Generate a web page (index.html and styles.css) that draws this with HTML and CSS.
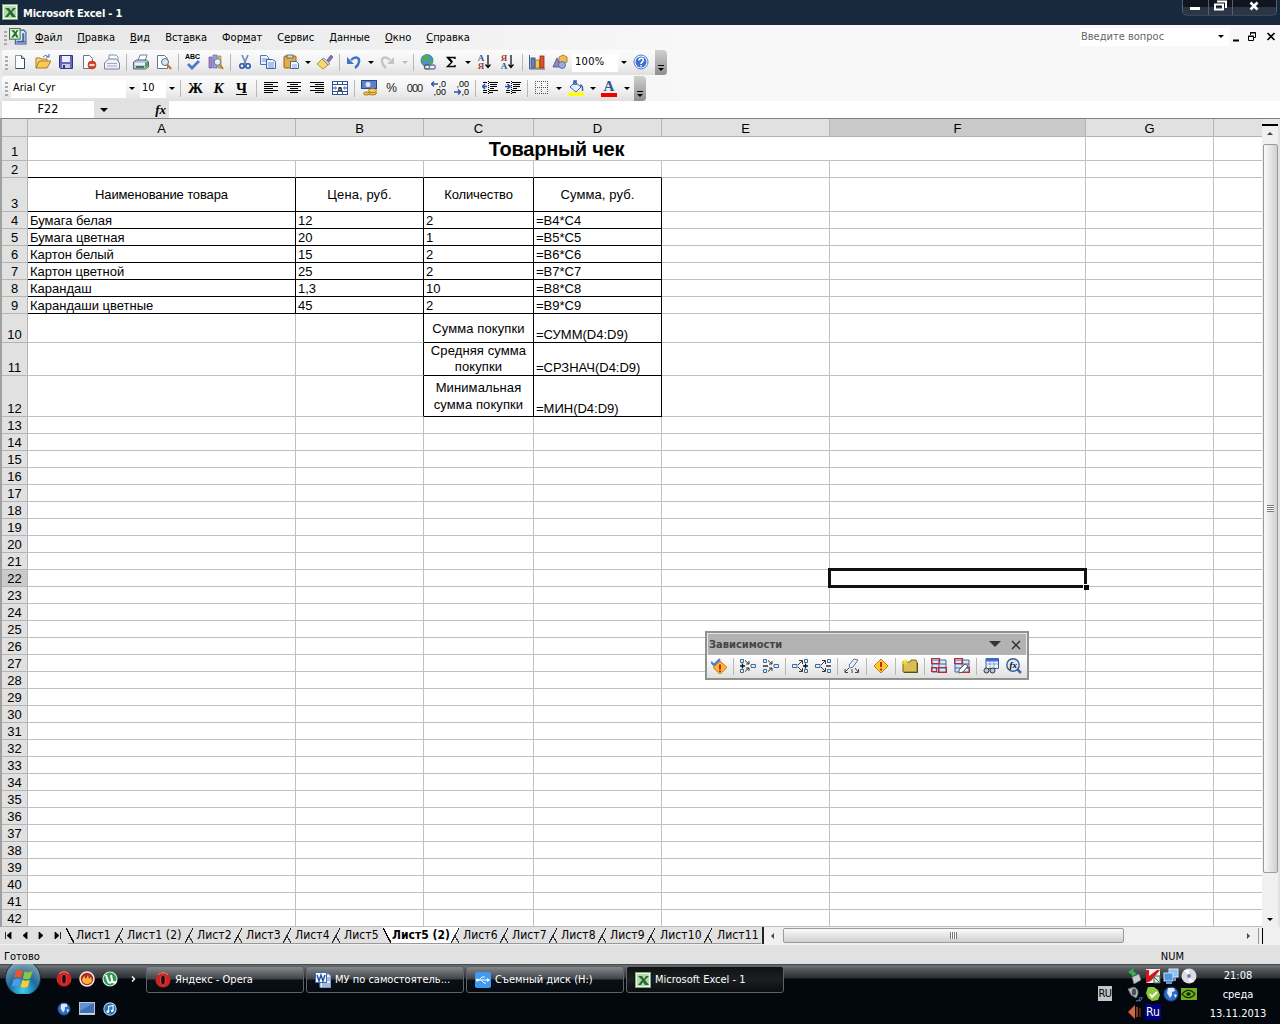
FILE: index.html
```html
<!DOCTYPE html>
<html lang="ru">
<head>
    <meta charset="UTF-8">
    <meta name="viewport" content="width=device-width, initial-scale=1.0">
    <title>Microsoft Excel - 1</title>
    <link rel="stylesheet" href="styles.css">
</head>
<body>
    <!-- Shared icons -->
    <svg class="sprite" width="0" height="0">
        <symbol id="excel" viewBox="0 0 16 16">
            <rect x=".5" y=".5" width="15" height="15" fill="#f2f8ee" stroke="#79a878"/>
            <rect x="2" y="2" width="12" height="12" fill="#b9d6b2"/>
            <path d="M3 4h4l2 3 2-3h3l-4 4 4 5h-4l-2-3-2 3H3l4-5z" fill="#256b32"/>
        </symbol>
        <symbol id="excel-doc" viewBox="0 0 17 16">
            <path d="M6 2h8l2 2v11H6z" fill="#dce8f8" stroke="#33548e"/>
            <path d="M7 13h8M13.500 5v8" stroke="#3f6aaa" stroke-width="2"/>
            <rect x=".5" y=".5" width="10" height="10" fill="#e4f2de" stroke="#3d7a40"/>
            <path d="M2 2h3l1 2 1-2h2L7 5l2 4H7L6 7 4 9H2l3-4z" fill="#256b32"/>
        </symbol>
        <symbol id="page" viewBox="0 0 16 16">
            <path d="M3.500 1.500h6l3 3v10h-9z" fill="#fdfeff" stroke="#8794aa"/>
            <path d="M9.500 1.500v3h3v10h-9" fill="none" stroke="#34496e"/>
        </symbol>
        <symbol id="open" viewBox="0 0 16 16">
            <path d="M1 14V4h4l1 1h6v2" fill="#f8dd86" stroke="#a67a1e"/>
            <path d="M1 14l3-7h12l-4 7z" fill="#fbc95a" stroke="#a67a1e"/>
            <path d="M8 3c2-2 4-2 5 0M11 3h3V0" fill="none" stroke="#3c64ac"/>
        </symbol>
        <symbol id="save" viewBox="0 0 16 16">
            <path d="M1.500 1.500h13v13h-12l-1-1z" fill="#6667c8" stroke="#34347e"/>
            <rect x="4" y="2" width="8" height="6" fill="#eef0fb"/>
            <rect x="4" y="10" width="8" height="4" fill="#c9cbe2"/>
            <rect x="5" y="11" width="2" height="3" fill="#34347e"/>
        </symbol>
        <symbol id="permission" viewBox="0 0 16 16">
            <path d="M2.500 1.500h6l3 3v10h-9z" fill="#fff" stroke="#66758f"/>
            <circle cx="11" cy="11" r="4" fill="#dc4526" stroke="#a33018" stroke-width=".6"/>
            <path d="M8.500 11h5" stroke="#fff" stroke-width="1.700"/>
        </symbol>
        <symbol id="mail" viewBox="0 0 16 16">
            <path d="M5 6V1h7l2 2v6" fill="#fff" stroke="#8793a6"/>
            <path d="M.5 9l4-4h8l3 4v6H.5z" fill="#eef1f5" stroke="#77849a"/>
            <path d="M3 9.500h10M3 12h10" fill="none" stroke="#a0abba"/>
        </symbol>
        <symbol id="print" viewBox="0 0 16 16">
            <path d="M5 7l2-6h7l-2 6" fill="#fff" stroke="#7282a0"/>
            <path d="M.5 8l3-2h10l2 2v5l-3 2H.5z" fill="#b9c7da" stroke="#54637d"/>
            <path d="M2 10h10" stroke="#eef3fa" stroke-width="2"/>
            <path d="M12 9l3-2v5l-3 2z" fill="#57a458"/>
            <path d="M3 13h8" stroke="#3f7d46" stroke-width="2"/>
        </symbol>
        <symbol id="preview" viewBox="0 0 16 16">
            <path d="M1.500 1.500h7l3 3v10h-10z" fill="#fff" stroke="#66758f"/>
            <circle cx="9" cy="8" r="3.500" fill="#d4e7f6" stroke="#5b6d84"/>
            <path d="M11.500 11l3.500 4" stroke="#b87833" stroke-width="2.200"/>
        </symbol>
        <symbol id="research" viewBox="0 0 16 16">
            <path d="M1 3h3v11H1z" fill="#a887cc" stroke="#694b93" stroke-width=".7"/>
            <path d="M5 1h4v13H5z" fill="#8fa7de" stroke="#4d68a8" stroke-width=".7"/>
            <path d="M10 2h3v12h-3z" fill="#e9c46b" stroke="#a37b2c" stroke-width=".7"/>
            <circle cx="9.500" cy="8" r="3.300" fill="#e3f0fb" stroke="#677a92"/>
            <path d="M12 11l3 4" stroke="#b87833" stroke-width="2"/>
        </symbol>
        <symbol id="cut" viewBox="0 0 16 16">
            <path d="M5 1l4 9M11 1l-4 9" stroke="#6f89ae" stroke-width="1.600"/>
            <circle cx="5" cy="12" r="2.200" fill="none" stroke="#2456b0" stroke-width="1.600"/>
            <circle cx="11" cy="12" r="2.200" fill="none" stroke="#2456b0" stroke-width="1.600"/>
        </symbol>
        <symbol id="copy" viewBox="0 0 16 16">
            <path d="M.5 1.500h6l2 2v7h-8z" fill="#eaf2ff" stroke="#4c73b5"/>
            <path d="M2 5h5M2 7h5" stroke="#7095cc"/>
            <path d="M6.500 5.500h6l3 2v7h-9z" fill="#eaf2ff" stroke="#3c64a8"/>
            <path d="M8 9h6M8 11h6M8 13h6" stroke="#7095cc"/>
        </symbol>
        <symbol id="paste" viewBox="0 0 16 16">
            <rect x="1" y="2" width="12" height="12" rx="1" fill="#e4ad49" stroke="#8d651f"/>
            <rect x="4" y="1" width="6" height="3" fill="#d9d9d9" stroke="#555" stroke-width=".8"/>
            <path d="M7.500 7.500h6l2 2v5h-8z" fill="#f2f6ff" stroke="#4d68a0"/>
            <path d="M9 11h5M9 13h5" stroke="#89a3d0"/>
        </symbol>
        <symbol id="brush" viewBox="0 0 16 16">
            <path d="M10 6l4-5 2 2-4 5z" fill="#8b6fb5" stroke="#4e3b79" stroke-width=".6"/>
            <path d="M7 4l6 6-2 1-6-6z" fill="#c9d0dd" stroke="#66708a" stroke-width=".6"/>
            <path d="M5 5l6 6-5 4-6-5z" fill="#f6d873" stroke="#a67f2a" stroke-width=".8"/>
        </symbol>
        <symbol id="undo" viewBox="0 0 16 16">
            <path d="M5 6c4-4 9-3 8 2-.3 2-1.500 4-4 6" fill="none" stroke="currentColor" stroke-width="2.400"/>
            <path d="M1 3v7h7z" fill="currentColor"/>
        </symbol>
        <symbol id="link" viewBox="0 0 16 16">
            <circle cx="7" cy="6.500" r="6" fill="#4a94c9" stroke="#2e6392" stroke-width=".7"/>
            <path d="M3 2c3-2 7-1 7 2l-3 1-1 3-4-1zM10 7l3-1-1 4-3 1z" fill="#54ac52"/>
            <rect x="4.500" y="11" width="6" height="4" rx="2" fill="#eee" stroke="#4e5d72" stroke-width="1.300"/>
            <rect x="9.300" y="11" width="6" height="4" rx="2" fill="#eee" stroke="#6c7f98" stroke-width="1.300"/>
        </symbol>
        <symbol id="sum" viewBox="0 0 16 16">
            <path d="M12 5V3.500H4.500L9 8l-4.500 4.500H12V11" fill="none" stroke="#000" stroke-width="1.400"/>
            <path d="M5 3.500L9 8" stroke="#000" stroke-width="2"/>
        </symbol>
        <symbol id="chart" viewBox="0 0 16 16">
            <path d="M.5 1v14H16" fill="none" stroke="#4c5e7c"/>
            <rect x="2" y="4" width="4" height="10" fill="#5a83d2" stroke="#27458a" stroke-width=".8"/>
            <rect x="6.500" y="6" width="4" height="8" fill="#f6c944" stroke="#9a7116" stroke-width=".8"/>
            <rect x="11" y="2" width="4" height="12" fill="#d8572e" stroke="#8a2a10" stroke-width=".8"/>
        </symbol>
        <symbol id="drawing" viewBox="0 0 16 16">
            <path d="M7 3l4-2 4 2v5l-4 2-4-2z" fill="#eebd56" stroke="#9a6d1f" stroke-width=".8"/>
            <path d="M1 13l4-9 4 9z" fill="#8c86cc" stroke="#4c478c" stroke-width=".8"/>
            <circle cx="10" cy="11" r="3.500" fill="#9aacd8" stroke="#4c5f9a" stroke-width=".8"/>
        </symbol>
        <symbol id="help" viewBox="0 0 16 16">
            <circle cx="8" cy="8" r="7" fill="#fff" stroke="#4d79c4"/>
            <circle cx="8" cy="8" r="5.500" fill="#3d6fd0"/>
            <path d="M6 6.500c0-3 4.500-3 4.300-.3C10.200 8 8 7.800 8 10M8 11v1.600" fill="none" stroke="#fff" stroke-width="1.500"/>
        </symbol>
        <symbol id="align-left" viewBox="0 0 16 16">
            <path d="M1 2.500h14M1 4.500h9M1 6.500h14M1 8.500h9M1 10.500h14M1 12.500h9" stroke="#000"/>
        </symbol>
        <symbol id="align-center" viewBox="0 0 16 16">
            <path d="M1 2.500h14M4 4.500h8M1 6.500h14M4 8.500h8M1 10.500h14M4 12.500h8" stroke="#000"/>
        </symbol>
        <symbol id="align-right" viewBox="0 0 16 16">
            <path d="M1 2.500h14M6 4.500h9M1 6.500h14M6 8.500h9M1 10.500h14M6 12.500h9" stroke="#000"/>
        </symbol>
        <symbol id="currency" viewBox="0 0 16 16">
            <rect x=".5" y=".5" width="15" height="8" fill="#5d82c9" stroke="#27458a"/>
            <circle cx="7" cy="4.500" r="2.500" fill="#dfe8f8"/>
            <ellipse cx="11.500" cy="13" rx="4" ry="2" fill="#f2b93c" stroke="#94681a" stroke-width=".8"/>
            <ellipse cx="11.500" cy="10.500" rx="4" ry="2" fill="#f7cf63" stroke="#94681a" stroke-width=".8"/>
            <ellipse cx="5.500" cy="13.500" rx="3" ry="1.600" fill="#f2b93c" stroke="#94681a" stroke-width=".8"/>
        </symbol>
        <symbol id="indent-lines" viewBox="0 0 16 16">
            <path d="M1 2.500h4M7 2.500h9M8 4.500h7M8 6.500h7M8 8.500h4M1 10.500h4M7 10.500h9M1 12.500h4M7 12.500h4" stroke="#000" stroke-width="1.200"/>
            <path d="M6.500 1v14" stroke="#000" stroke-dasharray="1 1"/>
        </symbol>
        <symbol id="outdent" viewBox="0 0 16 16">
            <use href="#indent-lines"/>
            <path d="M0 6.500h5M3 4L.5 6.500 3 9" fill="none" stroke="#2456b0" stroke-width="1.500"/>
        </symbol>
        <symbol id="indent" viewBox="0 0 16 16">
            <use href="#indent-lines"/>
            <path d="M0 6.500h5M2.500 4L5 6.500 2.500 9" fill="none" stroke="#2456b0" stroke-width="1.500"/>
        </symbol>
        <symbol id="borders" viewBox="0 0 16 16">
            <path d="M1 1.500h13M1 7.500h13M1 13.500h13M1.500 1v13M7.500 1v13M13.500 1v13" stroke="#555" stroke-dasharray="1 1"/>
        </symbol>
        <symbol id="fill" viewBox="0 0 16 16">
            <path d="M7 2l6 5-5 5-6-5z" fill="#e8effa" stroke="#4a6290"/>
            <path d="M6 5V1h2v4M12 5c2 0 3 2 2.500 6" fill="none" stroke="#2d5fb4" stroke-width="1.500"/>
            <rect y="12.500" width="16" height="3.500" fill="#ffff00"/>
        </symbol>

        <symbol id="warn" viewBox="0 0 16 16">
            <path d="M8 1l7 7-7 7-7-7z" fill="#ffc92e" stroke="#c08218"/>
            <path d="M8 4v5M8 10.500v2" stroke="#c4251a" stroke-width="2"/>
        </symbol>
        <symbol id="check-err" viewBox="0 0 16 16">
            <path d="M9 3l7 6.500L9 16 2 9.500z" fill="#ffb52e" stroke="#b97518"/>
            <path d="M9 6.500v5M9 12.500v1.500" stroke="#c4251a" stroke-width="2"/>
            <path d="M0 4l3 3 6-6" fill="none" stroke="#4c7acb" stroke-width="2.200"/>
        </symbol>
        <symbol id="trace-add" viewBox="0 0 16 16">
            <path d="M.5 1.500h3v3h-3zM.5 11.500h3v3h-3zM11 6.500h4.500v3H11z" fill="#e4eefc" stroke="#3d68a8"/>
            <path d="M5 2.500l4 3.500M5 13.500l4-3.500M9 3v3H6M9 13v-3H6" fill="none" stroke="#222" stroke-width=".9"/>
            <path d="M0 8h5M2.500 5.500v5" stroke="#111" stroke-width="1.300"/>
        </symbol>
        <symbol id="trace-del" viewBox="0 0 16 16">
            <path d="M.5 1.500h3v3h-3zM.5 11.500h3v3h-3zM11 6.500h4.500v3H11z" fill="#e4eefc" stroke="#3d68a8"/>
            <path d="M5 2.500l4 3.500M5 13.500l4-3.500M9 3v3H6M9 13v-3H6" fill="none" stroke="#222" stroke-width=".9"/>
            <path d="M0 8h5" stroke="#111" stroke-width="1.300"/>
        </symbol>
        <symbol id="dep-add" viewBox="0 0 16 16">
            <path d="M12.500 1.500h3v3h-3zM12.500 11.500h3v3h-3zM.5 6.500H5v3H.5z" fill="#e4eefc" stroke="#3d68a8"/>
            <path d="M6 7l4-4M6 9l4 4M7 2.500h3.500V6M7 13.500h3.500V10" fill="none" stroke="#222" stroke-width=".9"/>
            <path d="M11 8h5M13.500 5.500v5" stroke="#111" stroke-width="1.300"/>
        </symbol>
        <symbol id="dep-del" viewBox="0 0 16 16">
            <path d="M12.500 1.500h3v3h-3zM12.500 11.500h3v3h-3zM.5 6.500H5v3H.5z" fill="#e4eefc" stroke="#3d68a8"/>
            <path d="M6 7l4-4M6 9l4 4M7 2.500h3.500V6M7 13.500h3.500V10" fill="none" stroke="#222" stroke-width=".9"/>
            <path d="M11 8h5" stroke="#111" stroke-width="1.300"/>
        </symbol>
        <symbol id="erase" viewBox="0 0 16 16">
            <path d="M5 7l5-6 4 1-5 7-3 1z" fill="#eaf1fb" stroke="#5d7397"/>
            <path d="M5 10l-4 4M8 11v4M11 10l3 4M1 11v3.500h3M11 14.500h3.500V11" fill="none" stroke="#333" stroke-width=".9"/>
        </symbol>
        <symbol id="note" viewBox="0 0 16 16">
            <path d="M1 4h7l1-2h5l1 2v10H1z" fill="#d9bf52" stroke="#7d6a1d"/>
            <path d="M2 14.500h13.500V5" fill="none" stroke="#5a4c13"/>
            <path d="M3 1v6M0 4h6M1 2l4 4M5 2L1 6" stroke="#f8e71c"/>
        </symbol>
        <symbol id="circle-data" viewBox="0 0 16 16">
            <path d="M1 2h14v12H1zM1 6h14M1 10h14M8 2v12" fill="#dbe6f6" stroke="#44639c"/>
            <path d="M.5 .5h8v5h-8zM7.500 9.500h8v5h-8zM.5 9.500h5v4h-5z" fill="none" stroke="#c0282c" stroke-width="1.200"/>
        </symbol>
        <symbol id="circle-clear" viewBox="0 0 16 16">
            <path d="M1 2h14v12H1zM1 6h14M1 10h14M8 2v12" fill="#dbe6f6" stroke="#44639c"/>
            <path d="M.5 .5h8v5h-8zM7.500 9.500h8v5h-8z" fill="none" stroke="#c0282c" stroke-width="1.200"/>
            <path d="M5 12l6-6 3 2-5 6-4 1z" fill="#fff" stroke="#555"/>
        </symbol>
        <symbol id="watch" viewBox="0 0 16 16">
            <path d="M3 .5h12.500v10H3z" fill="#f0f5ff" stroke="#3d5c9e"/>
            <path d="M3 2h12" stroke="#3d6fd0" stroke-width="3"/>
            <path d="M7 3v7M11 3v7M4 6h11" stroke="#8fa7d4"/>
            <circle cx="3.500" cy="12.500" r="2.500" fill="#b9c4d6" stroke="#333"/>
            <circle cx="9.500" cy="12.500" r="2.500" fill="#b9c4d6" stroke="#333"/>
        </symbol>

        <symbol id="opera" viewBox="0 0 16 16">
            <circle cx="8" cy="8" r="7.500" fill="#cf2222"/>
            <path d="M3 3c3-3 7-3 10 0" fill="none" stroke="#f08a80"/>
            <ellipse cx="8" cy="8" rx="2.300" ry="5" fill="#2a0607" stroke="#e26a62" stroke-width=".7"/>
        </symbol>
        <symbol id="flame" viewBox="0 0 16 16">
            <circle cx="8" cy="8" r="7" fill="#b22c20" stroke="#f4ece8" stroke-width="1.500"/>
            <path d="M3 9l2-4 2 3 2-4 1 4 2-2 1 4c-2 4-9 4-10-1z" fill="#ffb43c"/>
        </symbol>
        <symbol id="utorrent" viewBox="0 0 16 16">
            <circle cx="8" cy="8" r="7" fill="#2e9a52" stroke="#d9efdf" stroke-width="1.200"/>
            <path d="M4 4l2 6c1 3 4 2 4-1L9 4M10 9c1 3 2 3 4 2" fill="none" stroke="#fff" stroke-width="2"/>
        </symbol>
        <symbol id="globe" viewBox="0 0 16 16">
            <circle cx="8" cy="8" r="7" fill="#2c6cc4" stroke="#1c468c"/>
            <path d="M5 2l6 0 1 3-3 1 0 3-2 3-3-5zM11 8l3 1-2 3z" fill="#dceafa"/>
        </symbol>
        <symbol id="desktop" viewBox="0 0 16 14">
            <rect x=".5" y=".5" width="15" height="12" fill="#3f70b8" stroke="#b9c7d6"/>
            <path d="M1 1h14L1 9z" fill="#6291d0"/>
            <path d="M1 11.500h14" stroke="#d4d9df"/>
        </symbol>
        <symbol id="itunes" viewBox="0 0 16 16">
            <circle cx="8" cy="8" r="7" fill="#2670b4" stroke="#a8d2ee" stroke-width="1.300"/>
            <path d="M6.500 11V5l5-1v6" fill="none" stroke="#fff" stroke-width="1.300"/>
            <circle cx="5.500" cy="11" r="1.500" fill="#fff"/><circle cx="10.500" cy="10" r="1.500" fill="#fff"/>
        </symbol>
        <symbol id="word" viewBox="0 0 16 16">
            <path d="M5 2h9l1.500 2v11.500H5z" fill="#e6eefa" stroke="#7f9ccc"/>
            <path d="M11 6h4M11 8h4M7 12h8M7 14h8" stroke="#6588c4"/>
            <rect x=".5" y=".5" width="11" height="10" fill="#fff" stroke="#4069b2"/>
            <path d="M2 3l2 6 2-6 2 6 2-6" fill="none" stroke="#2450a0" stroke-width="1.500"/>
        </symbol>
        <symbol id="usb" viewBox="0 0 16 16">
            <rect width="16" height="16" rx="2" fill="#3f9af0"/>
            <path d="M1 8h13M4 8l3-3h3M6 8l3 3h2" fill="none" stroke="#fff"/>
            <circle cx="2.500" cy="8" r="1.500" fill="#fff"/><path d="M12 6l3 2-3 2z" fill="#fff"/>
        </symbol>
        <symbol id="usb-tray" viewBox="0 0 16 16">
            <path d="M5 9l7-3 2 6-7 4z" fill="#c5ccd2" stroke="#6d757c" stroke-width=".7"/>
            <path d="M1 4l6-4-1 3 4 3-3 1-1 2-2-3z" fill="#37b44a"/>
        </symbol>
        <symbol id="kaspersky" viewBox="0 0 16 16">
            <rect x="1" y="1" width="14" height="14" fill="#f4f0ef"/>
            <path d="M1 2h3v6l8-6h3L6 13l-5 2z" fill="#cf1820"/>
            <path d="M9 8h6v7H9z" fill="#dfe6df" stroke="#44664a"/>
            <path d="M9 9l5 5" stroke="#44664a"/>
        </symbol>
        <symbol id="network" viewBox="0 0 16 16">
            <rect x="6" y="1" width="9" height="8" fill="#8cc3f2" stroke="#d5e8f8"/>
            <rect x="1" y="5" width="9" height="8" fill="#4f98dd" stroke="#cbe1f5"/>
            <path d="M3 15h6M12 9v4" stroke="#6b9dcb" stroke-width="2"/>
        </symbol>
        <symbol id="disc" viewBox="0 0 16 16">
            <circle cx="8" cy="8" r="7.500" fill="#d9dce6"/>
            <path d="M8 8L3 2h5zM8 8l5 6H8z" fill="#fff"/>
            <circle cx="8" cy="8" r="2" fill="#7a79b8"/>
        </symbol>
        <symbol id="volume" viewBox="0 0 16 16">
            <path d="M1 3l6-2c5 2 5 7 2 11L4 9z" fill="#b8bec4" stroke="#5a6066"/>
            <ellipse cx="7" cy="6" rx="2.200" ry="3.500" fill="#4a5057"/>
            <path d="M9 15c3 0 4-2 4-4M12 15c2 0 3-2 3-4" fill="none" stroke="#6c8fd8"/>
        </symbol>
        <symbol id="icq" viewBox="0 0 16 16">
            <path d="M3 1h6l4 3 2 5-2 5-6 1-4-3-2-5z" fill="#8cc63c"/>
            <path d="M5 8l2 3 5-5" fill="none" stroke="#fff" stroke-width="2"/>
        </symbol>
        <symbol id="nvidia" viewBox="0 0 16 12">
            <rect width="16" height="12" fill="#6fae22"/>
            <path d="M1 6c4-5 9-5 13 0-4 5-9 5-13 0z" fill="none" stroke="#10240a" stroke-width="1.200"/>
            <ellipse cx="7.500" cy="6" rx="2.200" ry="1.700" fill="#10240a"/>
        </symbol>
        <symbol id="horn" viewBox="0 0 16 16">
            <path d="M1 8l7-7v14z" fill="#d8653c"/>
            <path d="M10 3v10" stroke="#b1512e" stroke-width="1.500"/><path d="M13 4v9" stroke="#5f2b18" stroke-width="1.500"/>
        </symbol>
    </svg>

    <header class="titlebar">
        <svg class="ico"><use href="#excel"/></svg>
        <span>Microsoft Excel - 1</span>
        <div class="window-buttons">
            <svg width="95" height="16" viewBox="0 0 95 16">
                <path d="M.5 0v11q0 4 4 4h86q4 0 4-4V0" fill="#10151f" stroke="#536070"/>
                <path d="M1 7h93v4q0 3.500-4 3.500H5q-4 0-4-3.500z" fill="#2b3544"/>
                <path d="M26.500 0v15M50.500 0v15" stroke="#536070"/>
                <path d="M8 8.500h10" stroke="#fff" stroke-width="3"/>
                <path d="M33 4.500h8v5h-8zM35 1.500h9V8" fill="none" stroke="#fff" stroke-width="2"/>
                <path d="M68.500 2.500l7 7M75.500 2.500l-7 7" stroke="#fff" stroke-width="2.600"/>
            </svg>
        </div>
    </header>

    <nav class="menubar">
        <i class="grip"></i>
        <svg class="ico doc"><use href="#excel-doc"/></svg>
        <ul>
            <li><u>Ф</u>айл</li>
            <li><u>П</u>равка</li>
            <li><u>В</u>ид</li>
            <li>Вст<u>а</u>вка</li>
            <li>Фор<u>м</u>ат</li>
            <li>С<u>е</u>рвис</li>
            <li><u>Д</u>анные</li>
            <li><u>О</u>кно</li>
            <li><u>С</u>правка</li>
        </ul>
        <div class="question">Введите вопрос<i class="down"></i></div>
        <svg class="doc-buttons" width="44" height="12" viewBox="0 0 44 12">
            <path d="M1 9.500h6" stroke="#000" stroke-width="2"/>
            <path d="M16.500 5.500h5v4h-5zM16 5h6M18.500 4V1.500h5v5H22M18 2h6" fill="none" stroke="#000"/>
            <path d="M35.500 2l7 7M42.500 2l-7 7" stroke="#000" stroke-width="1.600"/>
        </svg>
    </nav>

    <div class="toolbars">
        <div class="toolbar">
            <i class="grip"></i>
            <b class="btn"><svg class="ico"><use href="#page"/></svg></b>
            <b class="btn"><svg class="ico"><use href="#open"/></svg></b>
            <b class="btn"><svg class="ico"><use href="#save"/></svg></b>
            <b class="btn"><svg class="ico"><use href="#permission"/></svg></b>
            <b class="btn"><svg class="ico"><use href="#mail"/></svg></b>
            <i class="sep"></i>
            <b class="btn"><svg class="ico"><use href="#print"/></svg></b>
            <b class="btn"><svg class="ico"><use href="#preview"/></svg></b>
            <i class="sep"></i>
            <b class="btn spell">
                <span>ABC</span>
                <svg width="16" height="10" viewBox="0 0 16 10"><path d="M3 4l4 4 7-7" fill="none" stroke="#4c7acb" stroke-width="2.800"/></svg>
            </b>
            <b class="btn"><svg class="ico"><use href="#research"/></svg></b>
            <i class="sep"></i>
            <b class="btn"><svg class="ico"><use href="#cut"/></svg></b>
            <b class="btn"><svg class="ico"><use href="#copy"/></svg></b>
            <b class="btn"><svg class="ico"><use href="#paste"/></svg></b>
            <i class="down"></i>
            <b class="btn"><svg class="ico"><use href="#brush"/></svg></b>
            <i class="sep"></i>
            <b class="btn undo"><svg class="ico"><use href="#undo"/></svg></b>
            <i class="down"></i>
            <b class="btn redo"><svg class="ico"><use href="#undo"/></svg></b>
            <i class="down off"></i>
            <i class="sep"></i>
            <b class="btn"><svg class="ico"><use href="#link"/></svg></b>
            <b class="btn"><svg class="ico"><use href="#sum"/></svg></b>
            <i class="down"></i>
            <b class="btn sort">
                <span class="letters"><span class="blue">А</span><span class="red">Я</span></span>
                <svg width="6" height="14" viewBox="0 0 6 14"><path d="M3 0v12M.5 9.500l2.500 3 2.500-3" fill="none" stroke="#000" stroke-width="1.200"/></svg>
            </b>
            <b class="btn sort">
                <span class="letters"><span class="red">Я</span><span class="blue">А</span></span>
                <svg width="6" height="14" viewBox="0 0 6 14"><path d="M3 0v12M.5 9.500l2.500 3 2.500-3" fill="none" stroke="#000" stroke-width="1.200"/></svg>
            </b>
            <i class="sep"></i>
            <b class="btn"><svg class="ico"><use href="#chart"/></svg></b>
            <b class="btn"><svg class="ico"><use href="#drawing"/></svg></b>
            <div class="combo zoom-box">100%</div><i class="down"></i>
            <b class="btn"><svg class="ico"><use href="#help"/></svg></b>
            <i class="cap"></i>
        </div>
        <div class="toolbar second">
            <i class="grip"></i>
            <div class="combo font-box">Arial Cyr</div><i class="down"></i>
            <div class="combo size-box">10</div><i class="down"></i>
            <i class="sep wide"></i>
            <b class="btn letter">Ж</b>
            <b class="btn letter italic">К</b>
            <b class="btn letter under">Ч</b>
            <i class="sep"></i>
            <b class="btn"><svg class="ico"><use href="#align-left"/></svg></b>
            <b class="btn"><svg class="ico"><use href="#align-center"/></svg></b>
            <b class="btn"><svg class="ico"><use href="#align-right"/></svg></b>
            <b class="btn">
                <svg class="ico" viewBox="0 0 16 16">
                    <rect x=".5" y="1.500" width="15" height="13" fill="#fff" stroke="#31538f"/>
                    <path d="M1 4.500h14M1 11.500h14M5.500 1v3M10.500 1v3M5.500 12v2M10.500 12v2" stroke="#31538f"/>
                    <path d="M1 8h3M12 8h3M3 6.500L4.500 8 3 9.500M13 6.500L11.500 8 13 9.500" fill="none" stroke="#2456b0"/>
                    <text x="5.700" y="10.500" class="merge-a">a</text>
                </svg>
            </b>
            <i class="sep"></i>
            <b class="btn"><svg class="ico"><use href="#currency"/></svg></b>
            <b class="btn sign">%</b>
            <b class="btn sign zeros">000</b>
            <b class="btn decimals">
                <span><svg width="7" height="6" viewBox="0 0 7 6"><path d="M0 3h7M3 .5L.5 3 3 5.500" fill="none" stroke="#2456b0" stroke-width="1.300"/></svg>,0</span>
                <span>,00</span>
            </b>
            <b class="btn decimals">
                <span>,00</span>
                <span><svg width="7" height="6" viewBox="0 0 7 6"><path d="M0 3h7M4 .5L6.500 3 4 5.500" fill="none" stroke="#2456b0" stroke-width="1.300"/></svg>,0</span>
            </b>
            <i class="sep"></i>
            <b class="btn"><svg class="ico"><use href="#outdent"/></svg></b>
            <b class="btn"><svg class="ico"><use href="#indent"/></svg></b>
            <i class="sep"></i>
            <b class="btn"><svg class="ico"><use href="#borders"/></svg></b>
            <i class="down"></i>
            <b class="btn"><svg class="ico"><use href="#fill"/></svg></b>
            <i class="down"></i>
            <b class="btn font-color">A</b>
            <i class="down"></i>
            <i class="cap"></i>
        </div>
    </div>

    <div class="formula-bar">
        <div class="name-box">F22</div>
        <div class="fx"><i class="down big"></i><em>fx</em></div>
        <div class="formula"></div>
    </div>

    <main class="workbook">
        <table class="sheet">
            <colgroup>
                <col class="c-num"><col class="c-a"><col class="c-b"><col class="c-c"><col class="c-d">
                <col class="c-e"><col class="c-f"><col class="c-g"><col class="c-h">
            </colgroup>
            <thead>
                <tr><th></th><th>A</th><th>B</th><th>C</th><th>D</th><th>E</th><th class="sel">F</th><th>G</th><th></th></tr>
            </thead>
            <tbody id="rows">
                <tr class="r1"><th>1</th><td colspan="6" class="title">Товарный чек</td><td></td><td></td></tr>
                <tr><th>2</th><td class="bb"></td><td class="bb"></td><td class="bb"></td><td class="bb"></td><td></td><td></td><td></td><td></td></tr>
                <tr class="r3"><th>3</th><td class="box head name">Наименование товара</td><td class="box head">Цена, руб.</td><td class="box head name">Количество</td><td class="box head">Сумма, руб.</td><td></td><td></td><td></td><td></td></tr>
                <tr><th>4</th><td class="box">Бумага белая</td><td class="box">12</td><td class="box">2</td><td class="box">=B4*C4</td><td></td><td></td><td></td><td></td></tr>
                <tr><th>5</th><td class="box">Бумага цветная</td><td class="box">20</td><td class="box">1</td><td class="box">=B5*C5</td><td></td><td></td><td></td><td></td></tr>
                <tr><th>6</th><td class="box">Картон белый</td><td class="box">15</td><td class="box">2</td><td class="box">=B6*C6</td><td></td><td></td><td></td><td></td></tr>
                <tr><th>7</th><td class="box">Картон цветной</td><td class="box">25</td><td class="box">2</td><td class="box">=B7*C7</td><td></td><td></td><td></td><td></td></tr>
                <tr><th>8</th><td class="box">Карандаш</td><td class="box">1,3</td><td class="box">10</td><td class="box">=B8*C8</td><td></td><td></td><td></td><td></td></tr>
                <tr><th>9</th><td class="box">Карандаши цветные</td><td class="box">45</td><td class="box">2</td><td class="box">=B9*C9</td><td></td><td></td><td></td><td></td></tr>
                <tr class="r10"><th>10</th><td></td><td class="br"></td><td class="box head">Сумма покупки</td><td class="box">=СУММ(D4:D9)</td><td></td><td></td><td></td><td></td></tr>
                <tr class="r11"><th>11</th><td></td><td class="br"></td><td class="box head">Средняя сумма<br>покупки</td><td class="box">=СРЗНАЧ(D4:D9)</td><td></td><td></td><td></td><td></td></tr>
                <tr class="r12"><th>12</th><td></td><td class="br"></td><td class="box head">Минимальная<br>сумма покупки</td><td class="box">=МИН(D4:D9)</td><td></td><td></td><td></td><td></td></tr>
            </tbody>
        </table>
        <div class="vscroll">
            <i class="split"></i>
            <i class="up"></i>
            <div class="thumb"><i></i></div>
            <i class="down"></i>
        </div>

        <div class="audit">
            <div class="audit-title">Зависимости<i class="down"></i>
                <svg width="10" height="10" viewBox="0 0 10 10"><path d="M1 1l8 8M9 1L1 9" stroke="#333" stroke-width="1.500"/></svg>
            </div>
            <div class="audit-tools">
                <b class="btn"><svg class="ico"><use href="#check-err"/></svg></b>
                <i class="sep"></i>
                <b class="btn"><svg class="ico"><use href="#trace-add"/></svg></b>
                <b class="btn"><svg class="ico"><use href="#trace-del"/></svg></b>
                <i class="sep"></i>
                <b class="btn"><svg class="ico"><use href="#dep-add"/></svg></b>
                <b class="btn"><svg class="ico"><use href="#dep-del"/></svg></b>
                <i class="sep"></i>
                <b class="btn"><svg class="ico"><use href="#erase"/></svg></b>
                <i class="sep"></i>
                <b class="btn"><svg class="ico"><use href="#warn"/></svg></b>
                <i class="sep"></i>
                <b class="btn"><svg class="ico"><use href="#note"/></svg></b>
                <i class="sep"></i>
                <b class="btn"><svg class="ico"><use href="#circle-data"/></svg></b>
                <b class="btn"><svg class="ico"><use href="#circle-clear"/></svg></b>
                <i class="sep"></i>
                <b class="btn"><svg class="ico"><use href="#watch"/></svg></b>
                <b class="btn">
                    <svg class="ico" viewBox="0 0 16 16">
                        <path d="M11.500 11.500L15 15" stroke="#3c66b0" stroke-width="2.500"/>
                        <circle cx="7" cy="7" r="6.200" fill="#d9e8fb" stroke="#3d5c8e" stroke-width="1.400"/>
                        <text x="3.500" y="10" class="small-fx">fx</text>
                    </svg>
                </b>
            </div>
        </div>
    </main>

    <div class="tabs-row">
        <svg class="tab-nav" width="68" height="16" viewBox="0 0 68 16">
            <path d="M5.500 5v7M11 5v7L7 8.500zM27 5v7l-4-3.500zM39 5v7l4-3.500zM55 5v7l4-3.500zM60.500 5v7" stroke="#000" stroke-width=".8"/>
        </svg>
        <div class="tabs">
            <span class="tab first">Лист1</span>
            <span class="tab w70">Лист1 (2)</span>
            <span class="tab">Лист2</span>
            <span class="tab">Лист3</span>
            <span class="tab">Лист4</span>
            <span class="tab w48">Лист5</span>
            <span class="tab active">Лист5 (2)</span>
            <span class="tab">Лист6</span>
            <span class="tab">Лист7</span>
            <span class="tab">Лист8</span>
            <span class="tab">Лист9</span>
            <span class="tab w57">Лист10</span>
            <span class="tab last">Лист11</span>
        </div>
        <div class="hscroll">
            <i class="left"></i>
            <div class="thumb"><i></i></div>
            <i class="right"></i>
            <i class="split"></i>
        </div>
    </div>

    <div class="status"><span>Готово</span><span class="num">NUM</span></div>

    <footer class="taskbar">
        <svg class="start" width="38" height="30" viewBox="0 0 38 30">
            <defs>
                <radialGradient id="orb" cx=".5" cy=".85" r=".8">
                    <stop offset="0" stop-color="#38d0f0"/><stop offset=".5" stop-color="#1c6c9c"/><stop offset="1" stop-color="#8fa3b0"/>
                </radialGradient>
            </defs>
            <circle cx="19" cy="14" r="17.500" fill="url(#orb)" stroke="#1b2c3a"/>
            <path d="M12 7q3.500-2 7 0l-1.800 7q-3.500-1.500-7 0z" fill="#e8562a"/>
            <path d="M20.500 7.500q3.500 1.500 8-.5l-2.200 7.500q-4 1.500-7.500 0z" fill="#8cc63e"/>
            <path d="M9.500 15.500q3.500-2 7.200 0L15 22.500q-3.500-1.500-7.200 0z" fill="#4f9be8"/>
            <path d="M18.300 16q3.500 1.500 7.500 0l-2 7q-3.500 1.500-7.300 0z" fill="#fccb3a"/>
        </svg>
        <div class="quick">
            <svg class="ico"><use href="#opera"/></svg>
            <svg class="ico"><use href="#flame"/></svg>
            <svg class="ico"><use href="#utorrent"/></svg>
            <svg class="ico small"><use href="#globe"/></svg>
            <svg class="ico"><use href="#desktop"/></svg>
            <svg class="ico small"><use href="#itunes"/></svg>
        </div>
        <svg class="more" width="6" height="8" viewBox="0 0 6 8"><path d="M1 1.500L3.500 4 1 6.500" fill="none" stroke="#fff" stroke-width="1.400"/></svg>
        <div class="tasks">
            <div class="task"><svg class="ico"><use href="#opera"/></svg>Яндекс - Opera</div>
            <div class="task"><svg class="ico"><use href="#word"/></svg>МУ по самостоятель...</div>
            <div class="task"><svg class="ico"><use href="#usb"/></svg>Съемный диск (H:)</div>
            <div class="task current"><svg class="ico"><use href="#excel"/></svg>Microsoft Excel - 1</div>
        </div>
        <div class="lang">RU</div>
        <div class="tray">
            <svg class="ico"><use href="#usb-tray"/></svg>
            <svg class="ico"><use href="#kaspersky"/></svg>
            <svg class="ico"><use href="#network"/></svg>
            <svg class="ico"><use href="#disc"/></svg>
            <svg class="ico"><use href="#volume"/></svg>
            <svg class="ico"><use href="#icq"/></svg>
            <svg class="ico"><use href="#globe"/></svg>
            <svg class="ico"><use href="#nvidia"/></svg>
            <svg class="ico"><use href="#horn"/></svg>
            <span class="punto">Ru</span>
        </div>
        <div class="clock"><span>21:08</span><span>среда</span><span>13.11.2013</span></div>
    </footer>

    <script>
        const rows = document.getElementById('rows');

        // empty rows under the receipt, F22 is the active cell
        for (let n = 13; n <= 42; n++) {
            const tr = document.createElement('tr');
            const th = document.createElement('th');
            th.textContent = n;
            tr.appendChild(th);
            for (let c = 1; c <= 8; c++) {
                const td = document.createElement('td');
                if (n === 22 && c === 6) td.className = 'cursor';
                tr.appendChild(td);
            }
            if (n === 22) th.className = 'sel';
            rows.appendChild(tr);
        }
    </script>
</body>
</html>
```
FILE: styles.css
```css
*,
*::before,
*::after {
    margin: 0;
    padding: 0;
    box-sizing: border-box;
}

body {
    width: 1280px;
    height: 1024px;
    overflow: hidden;
    display: flex;
    flex-direction: column;
    background-color: #e1e1e1;
    color: #000;
    font-family: "DejaVu Sans Condensed", "DejaVu Sans", "Noto Sans", sans-serif;
    font-size: 11px;
}

.sprite {
    position: absolute;
}

.ico {
    width: 16px;
    height: 16px;
    display: block;
    flex: none;
}

/* title */
.titlebar {
    height: 25px;
    background-color: #18293d;
    color: #fff;
    font-weight: bold;
    letter-spacing: -0.2px;
    display: flex;
    align-items: center;
    padding: 2px 3px 0 2px;
    gap: 5px;
}

.titlebar .ico {
    margin-top: -4px;
}

.window-buttons {
    margin-left: auto;
    align-self: flex-start;
    margin-top: -2px;
}

/* menu */
.menubar {
    height: 25px;
    background: linear-gradient(to right, #e6e6e6, #f8f8f8 700px);
    display: flex;
    align-items: center;
    padding-left: 4px;
}

.menubar .doc {
    width: 18px;
    height: 17px;
    margin: -2px 0 0 2px;
}

.menubar ul {
    display: flex;
    list-style: none;
    margin-left: 8px;
    gap: 15px;
}

.grip {
    width: 3px;
    height: 14px;
    background: repeating-linear-gradient(#aaa 0 2px, transparent 2px 4px);
}

.question {
    margin-left: auto;
    width: 149px;
    height: 18px;
    line-height: 17px;
    background-color: #fff;
    color: #666;
    display: flex;
    justify-content: space-between;
    align-items: center;
    padding: 0 3px 0 1px;
    margin-top: -2px;
}

.doc-buttons {
    margin: -1px 4px 0 3px;
}

/* toolbars */
.toolbars {
    height: 51px;
    background: linear-gradient(to right, #e9e9e9, #f8f8f8 700px);
    padding-left: 2px;
}

.toolbar {
    width: 665px;
    height: 25px;
    display: flex;
    align-items: center;
    background: linear-gradient(#fcfcfc, #f0f0f0 60%, #dfdfdf);
    border-radius: 3px 0 0 3px;
    padding-left: 3px;
}

.toolbar.second {
    width: 644px;
    margin-top: 1px;
}

.toolbar.second .grip {
    margin-right: 3px;
}

.btn {
    width: 23px;
    height: 23px;
    flex: none;
    display: flex;
    align-items: center;
    justify-content: center;
    font-weight: normal;
    padding-bottom: 1px;
}

.sep {
    width: 6px;
    height: 17px;
    flex: none;
    border-left: 1px solid #b8b8b8;
    margin-left: 3px;
    margin-right: -3px;
}

.sep.wide {
    width: 7px;
}

.down {
    width: 11px;
    height: 4px;
    flex: none;
}

.down::before {
    content: "";
    display: block;
    width: 0;
    margin: 0 auto;
    border: 3px solid transparent;
    border-top-color: #000;
    border-bottom: 0;
}

.down.off::before {
    border-top-color: #bbb;
}

.undo {
    color: #3f74c6;
}

.redo {
    color: #c4c4c4;
    transform: scaleX(-1);
}

.spell {
    flex-direction: column;
    justify-content: flex-start;
    padding-top: 2px;
    font: bold 7px/7px "Liberation Sans", Arial, sans-serif;
}

.sort {
    gap: 1px;
    font: bold 9px/8px "Liberation Serif", serif;
}

.letters,
.decimals {
    display: flex;
    flex-direction: column;
}

.blue {
    color: #2f5596;
}

.red {
    color: #a13a3a;
}

.decimals {
    align-items: flex-end;
    padding-right: 3px;
    font: 9px/8px "Liberation Sans", Arial, sans-serif;
}

.merge-a {
    font: bold 8px "Liberation Sans", Arial, sans-serif;
}

.small-fx {
    font: italic bold 9px "Liberation Serif", serif;
}

.font-color {
    height: 16px;
    width: 16px;
    margin: 0 4px 0 3px;
    border-bottom: 4px solid #f00000;
    color: #2f5596;
    font: bold 15px/12px "Liberation Serif", serif;
}

.combo {
    height: 18px;
    line-height: 16px;
    background-color: #fff;
    padding-left: 2px;
}

.zoom-box {
    width: 46px;
    margin-left: 1px;
    padding-left: 3px;
    letter-spacing: 0.3px;
}

.font-box {
    width: 115px;
}

.size-box {
    width: 26px;
    margin-left: 3px;
}

.cap {
    align-self: stretch;
    width: 12px;
    margin-left: auto;
    background: linear-gradient(#d0d0d0, #8f8f8f);
    border-radius: 0 4px 4px 0;
    display: flex;
    flex-direction: column;
    align-items: center;
    justify-content: flex-end;
    gap: 2px;
    padding-bottom: 4px;
}

.cap::before {
    content: "";
    width: 6px;
    height: 1px;
    background-color: #000;
}

.cap::after {
    content: "";
    border: 3px solid transparent;
    border-top-color: #000;
    border-bottom: 0;
}

.letter {
    font-family: "Liberation Serif", serif;
    font-weight: bold;
    font-size: 15px;
}

.letter.italic {
    font-style: italic;
}

.letter.under {
    text-decoration: underline;
}

.sign {
    font-family: "Liberation Sans", Arial, sans-serif;
    font-size: 12px;
    color: #222;
}

.sign.zeros {
    font-size: 11px;
    letter-spacing: -1px;
}

/* formula bar */
.formula-bar {
    height: 17px;
    display: flex;
    padding-left: 2px;
    background-color: #e1e1e1;
    font-size: 12.5px;
}

.name-box {
    width: 92px;
    background-color: #fff;
    text-align: center;
    line-height: 16px;
}

.fx {
    width: 75px;
    display: flex;
    align-items: center;
    justify-content: space-between;
    padding: 0 3px 0 3px;
}

.fx em {
    font: italic bold 13px "Liberation Serif", serif;
}

.down.big {
    width: 13px;
}

.down.big::before {
    border-width: 4px 4px 0;
}

.formula {
    flex: 1;
    background-color: #fff;
}

/* sheet */
.workbook {
    position: relative;
    height: 809px;
    display: flex;
    border-top: 1px solid #808080;
    border-left: 2px solid #a0a0a0;
}

.sheet {
    table-layout: fixed;
    width: 1260px;
    flex: none;
    border-collapse: separate;
    border-spacing: 0;
    background-color: #fff;
    font-family: "Liberation Sans", Arial, sans-serif;
    font-size: 13px;
}

.c-num { width: 26px; }
.c-a { width: 268px; }
.c-b { width: 128px; }
.c-c { width: 110px; }
.c-d { width: 128px; }
.c-e { width: 168px; }
.c-f { width: 256px; }
.c-g { width: 128px; }
.c-h { width: 48px; }

.sheet tr {
    height: 17px;
}

.sheet thead tr {
    height: 18px;
}

.sheet .r1 { height: 24px; }
.sheet .r3 { height: 34px; }
.sheet .r10 { height: 29px; }
.sheet .r11 { height: 33px; }
.sheet .r12 { height: 41px; }

.sheet th,
.sheet td {
    border-right: 1px solid #c0c0c0;
    border-bottom: 1px solid #c0c0c0;
    padding: 0 2px;
    line-height: 15px;
    vertical-align: bottom;
    white-space: nowrap;
}

.sheet th {
    background-color: #e1e1e1;
    border-color: #b4b4b4;
    font-weight: normal;
    font-size: 13px;
    text-align: center;
    padding: 0;
}

.sheet .r1 th {
    padding-bottom: 1px;
}

.sheet th.sel {
    background-color: #cacaca;
}

.sheet tr > :last-child {
    border-right: 0;
}

.sheet td.box {
    border-color: #000;
}

.sheet td.bb {
    border-bottom-color: #000;
}

.sheet td.br {
    border-right-color: #000;
}

.sheet td.head {
    text-align: center;
    vertical-align: middle;
    line-height: 17px;
    letter-spacing: 0.1px;
}

.sheet td.head.name {
    letter-spacing: -0.12px;
}

.sheet .r11 td.head {
    line-height: 16px;
}

.sheet td.title {
    font-size: 20px;
    line-height: 22px;
    font-weight: bold;
    text-align: center;
    letter-spacing: -0.25px;
}

.cursor {
    position: relative;
}

.cursor::before {
    content: "";
    position: absolute;
    left: -2px;
    top: -2px;
    width: 259px;
    height: 20px;
    border: 3px solid #111;
}

.cursor::after {
    content: "";
    position: absolute;
    left: 253px;
    top: 14px;
    width: 6px;
    height: 6px;
    background-color: #000;
    border: 1px solid #fff;
    border-width: 1px 0 0 1px;
}

/* scrollbars */
.vscroll {
    width: 16px;
    background-color: #f0f0f0;
    display: flex;
    flex-direction: column;
    align-items: center;
}

.vscroll .split {
    width: 16px;
    height: 7px;
    background-color: #e8e8e8;
    border-bottom: 2px solid #000;
}

.up {
    margin: 6px 0 9px;
    border: 3px solid transparent;
    border-bottom-color: #444;
    border-top: 0;
}

.thumb {
    background: linear-gradient(to right, #fafafa, #d0d0d0);
    border: 1px solid #9a9a9a;
    border-radius: 2px;
    display: flex;
    align-items: center;
    justify-content: center;
}

.vscroll .thumb {
    width: 15px;
    height: 729px;
}

.vscroll .thumb i {
    width: 7px;
    height: 7px;
    background: repeating-linear-gradient(#777 0 1px, #fff 1px 2px);
}

.vscroll .down {
    margin-top: 45px;
}

/* floating toolbar */
.audit {
    position: absolute;
    left: 703px;
    top: 512px;
    width: 324px;
    height: 49px;
    border: 2px solid #8f9390;
    background-color: #b3b3b3;
}

.audit-title {
    height: 22px;
    display: flex;
    align-items: center;
    padding: 0 5px 0 1px;
    border: 1px solid #e6e6e6;
    border-bottom: 0;
    font-weight: bold;
    color: #444;
}

.audit-title .down {
    margin: -3px 10px 0 auto;
    width: 12px;
}

.audit-title .down::before {
    border-width: 6px 6px 0;
    border-top-color: #333;
}

.audit-tools {
    height: 23px;
    display: flex;
    align-items: center;
    background: linear-gradient(#fff, #e0e0e0);
}

/* tabs */
.tabs-row {
    height: 17px;
    display: flex;
    background-color: #e1e1e1;
    font-size: 12px;
}

.tabs {
    width: 696px;
    display: flex;
    border-right: 2px solid #222;
    isolation: isolate;
}

.tab {
    position: relative;
    flex: none;
    width: 49px;
    height: 17px;
    line-height: 17px;
    white-space: nowrap;
    border-bottom: 1px solid #999;
    padding-left: 7px;
    letter-spacing: 0.1px;
}

/* slanted edge between two tabs */
.tab::before {
    content: "";
    position: absolute;
    left: -5px;
    top: 1px;
    width: 8px;
    height: 15px;
    background:
        linear-gradient(to top right, transparent 44%, #333 45% 57%, transparent 58%) 3px 7px / 5px 8px no-repeat,
        linear-gradient(to bottom right, transparent 46%, #222 47% 54%, transparent 55%) 0 0 / 8px 15px no-repeat;
}

.tab.first { width: 52px; padding-left: 8px; }
.tab.w70 { width: 70px; letter-spacing: 0.2px; }
.tab.w57 { width: 57px; padding-left: 8px; }
.tab.w48 { width: 48px; }
.tab.last { width: 52px; padding-left: 8px; }

.tab.first::before,
.tab.active::before {
    left: -2px;
    background: linear-gradient(to top right, transparent 45%, #000 46% 55%, transparent 56%);
}

.tab.active {
    width: 71px;
    font-weight: bold;
    letter-spacing: 0;
}

.tab.active::after {
    content: "";
    position: absolute;
    left: -2px;
    top: 0;
    width: 77px;
    height: 17px;
    z-index: -1;
    background-color: #fff;
    clip-path: polygon(0 0, 100% 0, 69px 100%, 8px 100%);
}

.hscroll {
    flex: 1;
    display: flex;
    align-items: center;
    background-color: #f0f0f0;
    padding-left: 7px;
}

.hscroll .left,
.hscroll .right {
    border: 3px solid transparent;
}

.hscroll .left {
    border-right-color: #444;
    border-left: 0;
    margin-right: 9px;
}

.hscroll .right {
    border-left-color: #444;
    border-right: 0;
    margin-left: 123px;
}

.hscroll .thumb {
    width: 341px;
    height: 15px;
    background: linear-gradient(#fafafa, #cfcfcf);
}

.hscroll .thumb i {
    width: 7px;
    height: 7px;
    background: repeating-linear-gradient(to right, #777 0 1px, #fff 1px 2px);
}

.hscroll .split {
    width: 5px;
    height: 16px;
    margin-left: 8px;
    border-left: 1px solid #999;
    border-right: 1px solid #000;
}

/* status */
.status {
    height: 20px;
    display: flex;
    align-items: center;
    padding: 4px 96px 0 4px;
    justify-content: space-between;
    border-top: 1px solid #f4f4f4;
    background-color: #e1e1e1;
}

/* taskbar */
.taskbar {
    height: 60px;
    display: flex;
    align-items: flex-start;
    color: #fff;
    background: linear-gradient(#3a3e40 0, #70767a 2px, #55595c 5px, #2b2f33 14px, #03080f 15px, #02070d);
}

.start {
    margin-left: 4px;
    flex: none;
}

.quick {
    margin: 7px 0 0 14px;
    width: 62px;
    display: grid;
    grid-template-columns: repeat(3, 16px);
    gap: 14px 7px;
    align-items: center;
    justify-items: center;
}

.ico.small {
    width: 14px;
    height: 14px;
}

.more {
    margin: 11px 0 0 13px;
}

.tasks {
    display: flex;
    gap: 2px;
    margin: 2px 0 0 9px;
}

.task {
    width: 158px;
    height: 27px;
    display: flex;
    align-items: center;
    gap: 4px;
    padding-left: 8px;
    border: 1px solid #5e6367;
    border-radius: 3px;
    background: linear-gradient(#85898c, #3f4347 12px, #0b1016 13px, #060b12);
    white-space: nowrap;
}

.task.current {
    background: linear-gradient(#111, #1c1f22 50%, #0a0c0f);
}

.lang {
    margin: 22px 0 0 auto;
    width: 14px;
    height: 15px;
    line-height: 15px;
    background-color: #c2c6c9;
    color: #000;
    text-align: center;
    letter-spacing: -0.5px;
}

.tray {
    margin: 4px 0 0 15px;
    width: 72px;
    display: grid;
    grid-template-columns: repeat(4, 16px);
    gap: 2px;
    justify-items: center;
}

.punto {
    width: 16px;
    background-color: #000080;
    font-size: 12px;
    line-height: 16px;
    text-align: center;
}

.clock {
    width: 72px;
    margin: 2px 6px 0 3px;
    display: flex;
    flex-direction: column;
    text-align: center;
    line-height: 19px;
}
```
